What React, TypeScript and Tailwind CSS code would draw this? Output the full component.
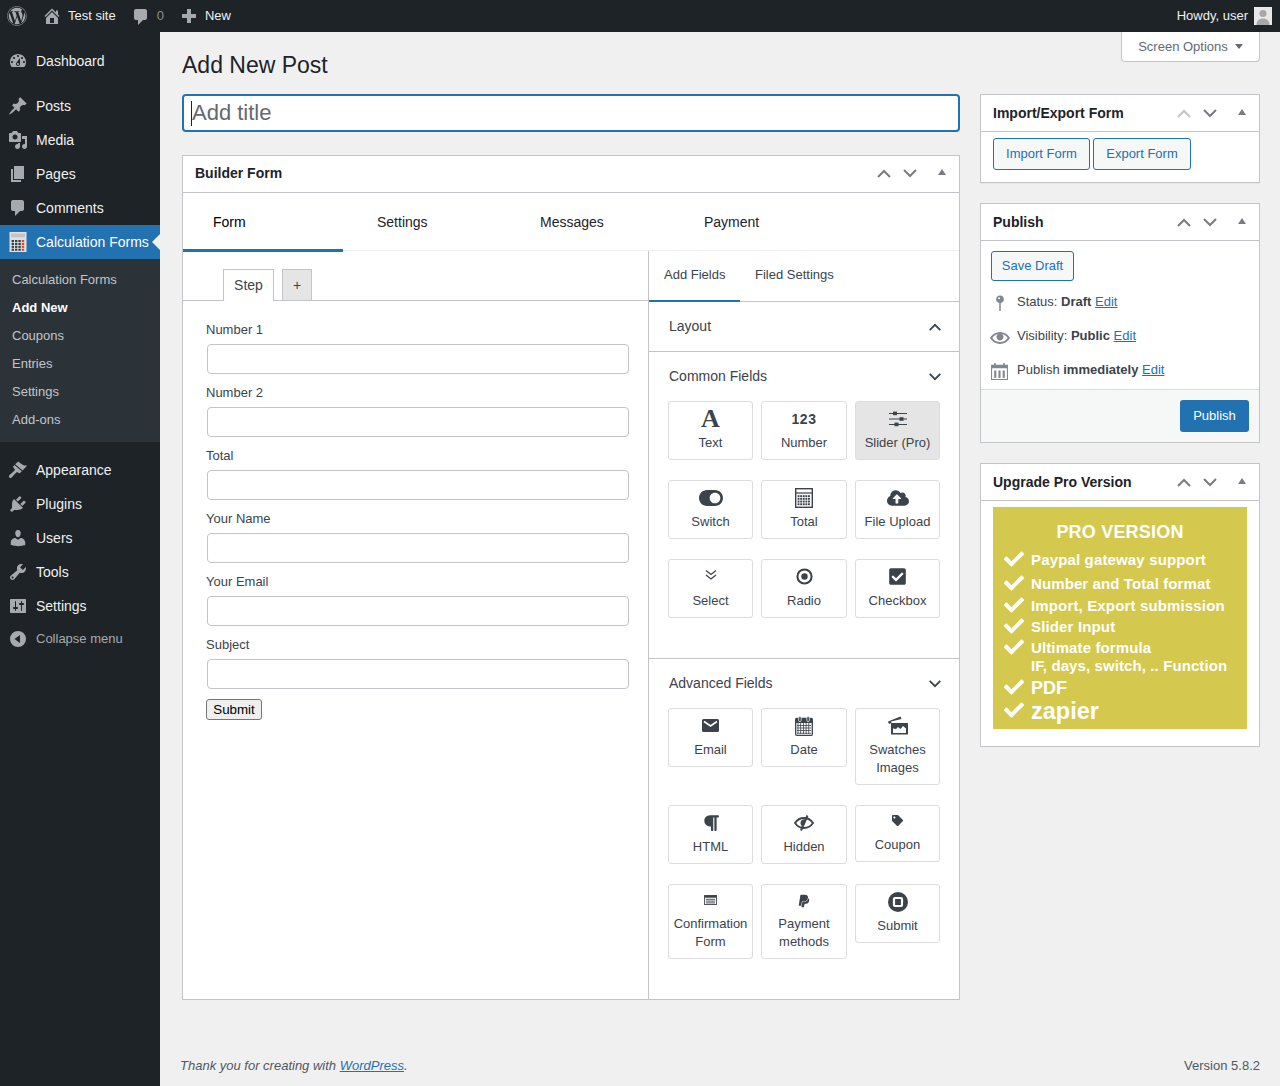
import React from "react";
import {
  FaWordpress, FaToggleOn, FaCloudUploadAlt, FaCheckSquare,
  FaParagraph, FaTag, FaPaypal, FaCheck,
} from "react-icons/fa";

const P: Record<string, string> = {
  dashboard: "M3.76 16h12.48c1.1-1.37 1.76-3.11 1.76-5 0-4.42-3.58-8-8-8s-8 3.58-8 8c0 1.89.66 3.63 1.76 5zM10 4c.55 0 1 .45 1 1s-.45 1-1 1-1-.45-1-1 .45-1 1-1zM6 6c.55 0 1 .45 1 1s-.45 1-1 1-1-.45-1-1 .45-1 1-1zm8 0c.55 0 1 .45 1 1s-.45 1-1 1-1-.45-1-1 .45-1 1-1zm-5.37 5.55L12 7v6c0 1.1-.9 2-2 2s-2-.9-2-2c0-.57.24-1.08.63-1.45zM4 10c.55 0 1 .45 1 1s-.45 1-1 1-1-.45-1-1 .45-1 1-1zm12 0c.55 0 1 .45 1 1s-.45 1-1 1-1-.45-1-1 .45-1 1-1zm-5 3c0-.55-.45-1-1-1s-1 .45-1 1 .45 1 1 1 1-.45 1-1z",
  pin: "M10.44 3.02l1.82-1.82 6.36 6.35-1.83 1.82c-1.05-.68-2.48-.57-3.41.36l-.75.75c-.92.93-1.04 2.35-.35 3.41l-1.83 1.82-2.41-2.41-2.8 2.79c-.42.42-3.38 2.71-3.8 2.29s1.86-3.39 2.28-3.81l2.79-2.79L4.1 9.36l1.83-1.82c1.05.69 2.48.57 3.4-.36l.75-.75c.93-.92 1.05-2.35.36-3.41z",
  media: "M13 11V4c0-.55-.45-1-1-1h-1.67L9 1H5L3.67 3H2c-.55 0-1 .45-1 1v7c0 .55.45 1 1 1h10c.55 0 1-.45 1-1zM7 4.5c1.38 0 2.5 1.12 2.5 2.5S8.38 9.5 7 9.5 4.5 8.38 4.5 7 5.62 4.5 7 4.5zM14 6h5v10.5c0 1.38-1.12 2.5-2.5 2.5S14 17.88 14 16.5s1.12-2.5 2.5-2.5c.17 0 .34.02.5.05V9h-3V6zm-4 8.05V13h2v3.5c0 1.38-1.12 2.5-2.5 2.5S7 17.88 7 16.5 8.12 14 9.5 14c.17 0 .34.02.5.05z",
  page: "M6 15V2h10v13H6zm-1 1h8v2H3V5h2v11z",
  comment: "M5 2h9c1.1 0 2 .9 2 2v7c0 1.1-.9 2-2 2h-2l-5 5v-5H5c-1.1 0-2-.9-2-2V4c0-1.1.9-2 2-2z",
  appearance: "M7.2 4.2 L10.2 1.6 C11.5 2.2 13 4.2 15 5 C16.5 5.6 18 5.6 19.2 5.4 L14.6 10.4 Z M6.4 5 L13.8 11.2 L12 13 C11.3 13.5 10.6 13.1 10 12.6 L9.2 12 C8.5 12.3 7.8 13 6.8 14 L3.6 17.6 C3 18.2 2 18 1.4 17.4 C0.8 16.8 0.8 15.9 1.4 15.2 L5 12 C6 11 6.6 10.4 7 9.6 L6.2 8.6 C5.6 8 5 7.2 5.2 6.4 Z",
  plugin: "M13.11 4.36L9.87 7.6 8 5.73l3.24-3.24c.35-.34 1.05-.2 1.56.32.52.51.66 1.21.31 1.55zm-8 1.77l.91-1.12 9.01 9.01-1.19.84c-.71.71-2.63 1.16-3.82 1.16H6.14L4.9 17.26c-.59.59-1.54.59-2.12 0-.59-.58-.59-1.53 0-2.12l1.24-1.24v-3.88c0-1.13.4-3.19 1.09-3.89zm7.26 3.97l3.24-3.24c.34-.35 1.04-.21 1.55.31.52.51.66 1.21.31 1.55l-3.24 3.25z",
  users: "M10 9.25c-2.27 0-2.73-3.44-2.73-3.44C7 4.02 7.82 2 9.97 2c2.16 0 2.98 2.02 2.71 3.81 0 0-.41 3.44-2.68 3.44zm0 2.57L12.72 10c2.39 0 4.52 2.33 4.52 4.53v2.49s-3.65 1.13-7.24 1.13c-3.65 0-7.24-1.13-7.24-1.13v-2.49c0-2.25 1.94-4.48 4.47-4.48z",
  tools: "M16.68 9.77c-1.34 1.34-3.3 1.67-4.95.99l-5.41 6.52c-.99.99-2.59.99-3.58 0s-.99-2.59 0-3.57l6.52-5.42c-.68-1.65-.35-3.61.99-4.95 1.28-1.28 3.12-1.62 4.72-1.06l-2.89 2.89 2.82 2.82 2.86-2.87c.53 1.58.18 3.39-1.08 4.65zM3.81 16.21c.4.39 1.04.39 1.43 0 .4-.4.4-1.04 0-1.43-.39-.4-1.03-.4-1.43 0-.39.39-.39 1.03 0 1.43z",
  settings: "M18 16V4c0-.55-.45-1-1-1H3c-.55 0-1 .45-1 1v12c0 .55.45 1 1 1h14c.55 0 1-.45 1-1zM8 11h1c.55 0 1 .45 1 1s-.45 1-1 1H8v1.5c0 .28-.22.5-.5.5s-.5-.22-.5-.5V13H6c-.55 0-1-.45-1-1s.45-1 1-1h1V5.5c0-.28.22-.5.5-.5s.5.22.5.5V11zm5-2h-1c-.55 0-1-.45-1-1s.45-1 1-1h1V5.5c0-.28.22-.5.5-.5s.5.22.5.5V7h1c.55 0 1 .45 1 1s-.45 1-1 1h-1v5.5c0 .28-.22.5-.5.5s-.5-.22-.5-.5V9z",
  collapse: "M10 2a8 8 0 1 0 0 16 8 8 0 0 0 0-16zm2 12L6.5 10 12 6v8z",
  home: "M16 8.5l1.53 1.53-1.06 1.06L10 4.62l-6.47 6.47-1.06-1.06L10 2.5l4 4v-2h2v4zm-6-2.46l6 5.99V18H4v-5.97zM12 17v-5H8v5h4z",
  plus: "M17 8v4h-5v5H8v-5H3V8h5V3h4v5h5z",
  eye: "M19.7 9.4C17.7 6 14 3.9 10 3.9S2.3 6 .3 9.4L0 10l.3.6c2 3.4 5.7 5.5 9.7 5.5s7.7-2.1 9.7-5.5l.3-.6-.3-.6zM10 14.1c-3.1 0-6-1.6-7.7-4.1C3.6 8 5.7 6.6 8 6.1c-.9.6-1.5 1.7-1.5 2.9 0 1.9 1.6 3.5 3.5 3.5s3.5-1.6 3.5-3.5c0-1.2-.6-2.3-1.5-2.9 2.3.5 4.4 1.9 5.7 3.9-1.7 2.5-4.6 4.1-7.7 4.1z",
};

function D({ n, className }: { n: string; className?: string }) {
  return (
    <svg viewBox="0 0 20 20" fill="currentColor" className={className}>
      <path d={P[n]} />
    </svg>
  );
}

function CalcMenuIcon() {
  const keys: React.ReactElement[] = [];
  for (let r = 0; r < 4; r++) {
    for (let c = 0; c < 4; c++) {
      keys.push(<rect key={`${r}-${c}`} x={2.6 + c * 3.4} y={8 + r * 2.9} width="2.4" height="2.1" fill={c === 3 ? "#e2492f" : "#3b4045"} />);
    }
  }
  return (
    <svg viewBox="0 0 18 20" className="w-[18px] h-[20px]">
      <rect x="0.5" y="0" width="17" height="20" fill="#dfe1e2" />
      <rect x="2" y="1.5" width="14" height="3.8" fill="#c2c5c7" />
      {keys}
    </svg>
  );
}

const navTop = [
  { n: "pin", t: "Posts" },
  { n: "media", t: "Media" },
  { n: "page", t: "Pages" },
  { n: "comment", t: "Comments" },
];
const navBottom = [
  { n: "appearance", t: "Appearance" },
  { n: "plugin", t: "Plugins" },
  { n: "users", t: "Users" },
  { n: "tools", t: "Tools" },
  { n: "settings", t: "Settings" },
];
const subs = ["Calculation Forms", "Add New", "Coupons", "Entries", "Settings", "Add-ons"];

function NavItem({ n, t }: { n: string; t: string }) {
  return (
    <div className="h-[34px] flex items-center text-[14px] text-[#f0f0f1]">
      <D n={n} className="w-5 h-5 ml-[8px] mr-[8px] text-[#a7aaad]" />
      {t}
    </div>
  );
}

function Chevron({ up, className }: { up?: boolean; className?: string }) {
  return (
    <svg viewBox="0 0 14 9" fill="none" stroke="currentColor" strokeWidth="2" className={className}>
      <polyline points={up ? "1,8 7,2 13,8" : "1,1 7,7 13,1"} />
    </svg>
  );
}

function BoxHeader({ title, dimUp, raised }: { title: string; dimUp?: boolean; raised?: boolean }) {
  return (
    <div className={`h-[37px] border-b border-[#c3c4c7] flex items-center pl-[12px] text-[14px] font-bold text-[#1d2327] ${raised ? "pb-[1px]" : ""}`}>
      <span className="flex-1">{title}</span>
      <Chevron up className={`w-[14px] h-[9px] mr-[12px] ${dimUp ? "text-[#c3c4c7]" : "text-[#787c82]"}`} />
      <Chevron className="w-[14px] h-[9px] mr-[21px] text-[#787c82]" />
      <span className="w-0 h-0 border-x-[4.5px] border-x-transparent border-b-[6px] border-b-[#787c82] mb-[3px] mr-[13px]" />
    </div>
  );
}

function Card({ t, icon, small, active }: { t: React.ReactNode; icon: React.ReactNode; small?: boolean; active?: boolean }) {
  return (
    <div className={`border border-[#dcdcde] rounded-[3px] flex flex-col items-center text-[13px] leading-[18px] text-[#3c434a] pb-[7px] ${active ? "bg-[#e5e5e5]" : "bg-white"}`}>
      <div className={`flex items-center justify-center pt-[1px] ${small ? "h-[30px]" : "h-[32px]"}`}>{icon}</div>
      <div className="text-center">{t}</div>
    </div>
  );
}

function SliderIcon() {
  return (
    <svg viewBox="0 0 18 16" className="w-[18px] h-[16px]" fill="#3c434a">
      <rect x="0" y="2" width="18" height="1" />
      <rect x="0" y="7.5" width="18" height="1" />
      <rect x="0" y="13" width="18" height="1" />
      <rect x="4" y="0.6" width="4" height="3.6" />
      <rect x="10.5" y="6.2" width="4" height="3.6" />
      <rect x="5.5" y="11.6" width="4" height="3.6" />
    </svg>
  );
}
function TotalIcon() {
  const k: React.ReactElement[] = [];
  for (let r = 0; r < 4; r++) for (let c = 0; c < 5; c++) k.push(<rect key={`${r}${c}`} x={2.6 + c * 2.6} y={7.2 + r * 2.7} width="1.9" height="1.9" fill="#3c434a" />);
  return (
    <svg viewBox="0 0 18 20" className="w-[18px] h-[20px]">
      <rect x="0.7" y="0.7" width="16.6" height="18.6" fill="none" stroke="#3c434a" strokeWidth="1.4" />
      <rect x="1" y="4.4" width="16" height="1.2" fill="#3c434a" />
      {k}
    </svg>
  );
}
function DateIcon() {
  const l: React.ReactElement[] = [];
  for (let i = 0; i < 4; i++) l.push(<rect key={`h${i}`} x="2" y={9 + i * 2.6} width="14" height="0.8" fill="#3c434a" />);
  for (let i = 0; i < 5; i++) l.push(<rect key={`v${i}`} x={2.6 + i * 2.7} y="7" width="0.8" height="11" fill="#3c434a" />);
  return (
    <svg viewBox="0 0 18 20" className="w-[18px] h-[20px]">
      <rect x="0.7" y="2.5" width="16.6" height="16.8" fill="none" stroke="#3c434a" strokeWidth="1.3" rx="1" />
      <rect x="0.7" y="2.5" width="16.6" height="4.5" fill="#3c434a" />
      <rect x="3.6" y="0.6" width="2.6" height="5" rx="1.3" fill="#3c434a" stroke="#fff" strokeWidth="0.7" />
      <rect x="11.8" y="0.6" width="2.6" height="5" rx="1.3" fill="#3c434a" stroke="#fff" strokeWidth="0.7" />
      {l}
    </svg>
  );
}
function SwatchIcon() {
  return (
    <svg viewBox="0 0 20 20" className="w-[20px] h-[20px]" fill="#3c434a">
      <path d="M0 5.5 L12.5 0.5 L13.5 3 L3 5.5 L3.5 7 L1 8z" />
      <path d="M3 7h17v11.5H3zM5 12.5v4.5h13v-4.5l-3-2.5-2.5 3-2.5-2-2 2z" fillRule="evenodd" />
    </svg>
  );
}
function RadioIcon() {
  return (
    <svg viewBox="0 0 18 18" className="w-[17px] h-[17px]">
      <circle cx="9" cy="9" r="7.5" fill="none" stroke="#3c434a" strokeWidth="2.2" />
      <circle cx="9" cy="9" r="3.4" fill="#3c434a" />
    </svg>
  );
}
function SubmitIcon() {
  return (
    <svg viewBox="0 0 20 20" className="w-[20px] h-[20px]">
      <circle cx="10" cy="10" r="10" fill="#3c434a" />
      <rect x="6" y="6" width="8" height="8" rx="1" fill="none" stroke="#fff" strokeWidth="2.2" />
    </svg>
  );
}
function FormIcon() {
  return (
    <svg viewBox="0 0 14 11" className="w-[13px] h-[10px] mb-[2px]">
      <rect x="0.5" y="0.5" width="13" height="10" fill="none" stroke="#3c434a" />
      <rect x="0.5" y="0.5" width="13" height="2.5" fill="#3c434a" />
      <rect x="2" y="4.2" width="10" height="1" fill="#3c434a" />
      <rect x="2" y="6.2" width="10" height="1" fill="#3c434a" />
      <rect x="2" y="8.2" width="10" height="1" fill="#3c434a" />
    </svg>
  );
}
function SelectIcon() {
  return (
    <svg viewBox="0 0 12 12" fill="none" stroke="#3c434a" strokeWidth="1.3" className="w-[12px] h-[12px] mb-[3px]">
      <polyline points="1,1.5 6,5.5 11,1.5" />
      <polyline points="1,6 6,10 11,6" />
    </svg>
  );
}
function EmailIcon() {
  return (
    <svg viewBox="0 0 17 13" className="w-[17px] h-[13px]">
      <rect x="0" y="0" width="17" height="13" rx="1.5" fill="#3c434a" />
      <polyline points="2,2.5 8.5,7 15,2.5" fill="none" stroke="#fff" strokeWidth="1.6" />
    </svg>
  );
}
function HiddenIcon() {
  return (
    <svg viewBox="0 0 20 16" className="w-[20px] h-[16px]" fill="none" stroke="#3c434a" strokeWidth="1.8">
      <path d="M1 8c2.2-3.2 5.4-5 9-5s6.8 1.8 9 5c-2.2 3.2-5.4 5-9 5S3.2 11.200 1 8z" />
      <path d="M6.500 8a3.500 3.500 0 0 1 5.500-3L8 11a3.500 3.500 0 0 1-1.500-3z" fill="#3c434a" stroke="none" />
      <line x1="13.500" y1="0.500" x2="7" y2="15.500" strokeWidth="2" />
    </svg>
  );
}

const ic = "text-[#3c434a]";
const commonRows: React.ReactNode[][] = [
  [
    <Card key="a" t="Text" icon={<span className={`${ic} [font-family:Liberation_Serif,serif] font-bold text-[26px] leading-none`}>A</span>} />,
    <Card key="b" t="Number" icon={<span className={`${ic} font-bold text-[14px] tracking-[0.5px]`}>123</span>} />,
    <Card key="c" t="Slider (Pro)" active icon={<SliderIcon />} />,
  ],
  [
    <Card key="a" t="Switch" icon={<FaToggleOn className={`${ic} w-[24px] h-[24px]`} />} />,
    <Card key="b" t="Total" icon={<TotalIcon />} />,
    <Card key="c" t="File Upload" icon={<FaCloudUploadAlt className={`${ic} w-[22px] h-[22px]`} />} />,
  ],
  [
    <Card key="a" t="Select" icon={<SelectIcon />} />,
    <Card key="b" t="Radio" icon={<RadioIcon />} />,
    <Card key="c" t="Checkbox" icon={<FaCheckSquare className={`${ic} w-[19px] h-[19px]`} />} />,
  ],
];
const advRows: React.ReactNode[][] = [
  [
    <Card key="a" t="Email" icon={<EmailIcon />} />,
    <Card key="b" t="Date" icon={<DateIcon />} />,
    <Card key="c" t={<>Swatches<br />Images</>} icon={<SwatchIcon />} />,
  ],
  [
    <Card key="a" t="HTML" icon={<FaParagraph className={`${ic} w-[16px] h-[18px]`} />} />,
    <Card key="b" t="Hidden" icon={<HiddenIcon />} />,
    <Card key="c" t="Coupon" small icon={<FaTag className={`${ic} w-[11px] h-[11px] mb-[3px]`} />} />,
  ],
  [
    <Card key="a" t={<>Confirmation<br />Form</>} small icon={<FormIcon />} />,
    <Card key="b" t={<>Payment<br />methods</>} small icon={<FaPaypal className={`${ic} w-[12px] h-[14px]`} />} />,
    <Card key="c" t="Submit" icon={<SubmitIcon />} />,
  ],
];

function CardGrid({ rows, gaps }: { rows: React.ReactNode[][]; gaps: string[] }) {
  return (
    <div className="pl-[19px]">
      {rows.map((r, i) => (
        <div key={i} className={`grid grid-cols-[85px_86px_85px] gap-x-[8px] items-start ${gaps[i]}`}>
          {r}
        </div>
      ))}
    </div>
  );
}

const fields = ["Number 1", "Number 2", "Total", "Your Name", "Your Email", "Subject"];

const bannerLines = [
  { t: "Paypal gateway support", y: "top-[44px]", s: "text-[15px] tracking-[0.15px]", cy: "top-[42px]" },
  { t: "Number and Total format", y: "top-[68px]", s: "text-[15px] tracking-[0.1px]", cy: "top-[66px]" },
  { t: "Import, Export submission", y: "top-[90px]", s: "text-[15px] tracking-[0.15px]", cy: "top-[88px]" },
  { t: "Slider Input", y: "top-[111px]", s: "text-[15px] tracking-[0.15px]", cy: "top-[109px]" },
  { t: "Ultimate formula", y: "top-[132px]", s: "text-[15px] tracking-[0.12px]", cy: "top-[130px]" },
  { t: "IF, days, switch, .. Function", y: "top-[150px]", s: "text-[15px] tracking-[0.1px]", cy: "" },
  { t: "PDF", y: "top-[172px]", s: "text-[18px]", cy: "top-[170px]" },
  { t: "zapier", y: "top-[195px]", s: "text-[23.5px]", cy: "top-[193px]" },
];

export default function App() {
  return (
    <div className="relative w-[1280px] h-[1086px] bg-[#f0f0f1] overflow-hidden [font-family:Liberation_Sans,Arial,sans-serif] text-[13px] text-[#3c434a]">
      {/* Admin bar */}
      <div className="h-[32px] bg-[#1d2327] flex items-center text-[13px] text-[#f0f0f1]">
        <FaWordpress className="w-[20px] h-[20px] ml-[7px] text-[#a7aaad]" />
        <D n="home" className="w-[20px] h-[20px] ml-[15px] text-[#a7aaad]" />
        <span className="ml-[6px]">Test site</span>
        <D n="comment" className="w-[20px] h-[20px] ml-[15px] text-[#a7aaad] mt-[2px]" />
        <span className="ml-[6px] text-[#8c8f94]">0</span>
        <D n="plus" className="w-[20px] h-[20px] ml-[15px] text-[#a7aaad]" />
        <span className="ml-[6px]">New</span>
        <span className="ml-auto">Howdy, user</span>
        <div className="w-[18px] h-[18px] ml-[6px] mr-[8px] bg-[#e8e8e8] flex items-end justify-center overflow-hidden">
          <svg viewBox="0 0 18 18" className="w-[18px] h-[18px]" fill="#a8a8a8">
            <circle cx="9" cy="6.5" r="3.6" />
            <path d="M2.5 18c0-4.5 3-6.5 6.5-6.5s6.5 2 6.5 6.5z" />
          </svg>
        </div>
      </div>

      <div className="flex h-[1054px]">
        {/* Sidebar */}
        <div className="w-[160px] h-full bg-[#1d2327] shrink-0">
          <div className="pt-[12px]">
            <NavItem n="dashboard" t="Dashboard" />
          </div>
          <div className="mt-[11px]">
            {navTop.map((x) => (
              <NavItem key={x.t} n={x.n} t={x.t} />
            ))}
          </div>
          <div className="relative h-[34px] bg-[#2271b1] flex items-center text-[14px] text-white">
            <div className="ml-[9px] mr-[9px] flex"><CalcMenuIcon /></div>
            <span className="whitespace-nowrap">Calculation Forms</span>
            <span className="absolute right-0 top-[9px] w-0 h-0 border-y-[8px] border-y-transparent border-r-[8px] border-r-[#f0f0f1]" />
          </div>
          <div className="bg-[#2c3338] pt-[7px] pb-[8px]">
            {subs.map((s) => (
              <div key={s} className={`h-[28px] pl-[12px] flex items-center text-[13px] ${s === "Add New" ? "font-bold text-white" : "text-[#c3c4c7]"}`}>
                {s}
              </div>
            ))}
          </div>
          <div className="mt-[11px]">
            {navBottom.map((x) => (
              <NavItem key={x.t} n={x.n} t={x.t} />
            ))}
          </div>
          <div className="h-[32px] flex items-center text-[13px] text-[#a7aaad]">
            <D n="collapse" className="w-5 h-5 ml-[8px] mr-[8px]" />
            Collapse menu
          </div>
        </div>

        {/* Main */}
        <div className="relative flex-1 pl-[22px] pr-[20px]">
          <div className="absolute right-[20px] top-0 w-[139px] h-[30px] bg-white border border-t-0 border-[#c3c4c7] rounded-b-[4px] flex items-center justify-center text-[13px] text-[#646970]">
            Screen Options
            <span className="ml-[7px] w-0 h-0 border-x-[4px] border-x-transparent border-t-[5px] border-t-[#646970]" />
          </div>

          <h1 className="h-[62px] pt-[19px] text-[23px] leading-[29px] font-normal text-[#1d2327]">Add New Post</h1>

          <div className="flex gap-[20px] items-start">
            {/* Left column */}
            <div className="w-[778px]">
              <div className="relative h-[38px] bg-white border-2 border-[#2271b1] rounded-[4px] flex items-center pl-[8px] pb-[1px] text-[22px] text-[#646970]">
                <span className="absolute left-[7px] top-[5px] w-[1px] h-[25px] bg-[#1d2327]" />
                Add title
              </div>

              <div className="mt-[23px] h-[845px] bg-white border border-[#c3c4c7] flex flex-col">
                <BoxHeader title="Builder Form" raised />
                {/* main tabs */}
                <div className="h-[58px] shrink-0 flex text-[14px] text-[#1d2327] border-b-[1px] border-[#f0f0f1] relative">
                  <div className="relative z-10 w-[160px] h-[59px] pl-[30px] pt-[19px] text-black border-b-[3px] border-[#2271b1]">Form</div>
                  <div className="absolute left-[194px] top-[19px]">Settings</div>
                  <div className="absolute left-[357px] top-[19px]">Messages</div>
                  <div className="absolute left-[521px] top-[19px]">Payment</div>
                </div>

                <div className="flex flex-1">
                  {/* form area */}
                  <div className="w-[466px] border-r border-[#c3c4c7]">
                    <div className="h-[50px] border-b border-[#c3c4c7] flex items-end pl-[40px] text-[14px]">
                      <div className="w-[51px] h-[32px] -mb-[1px] bg-white border border-b-0 border-[#c3c4c7] flex items-center justify-center">Step</div>
                      <div className="w-[30px] h-[31px] ml-[8px] bg-[#e5e5e5] border border-b-0 border-[#c3c4c7] flex items-center justify-center">+</div>
                    </div>
                    <div className="pl-[23px] pt-[21px]">
                      {fields.map((f) => (
                        <div key={f} className="h-[63px]">
                          <div className="h-[16px] leading-[16px] text-[13px]">{f}</div>
                          <div className="mt-[6px] ml-[1px] w-[422px] h-[30px] bg-white border border-[#c3c4c7] rounded-[4px]" />
                        </div>
                      ))}
                      <button className="block -mt-[1px] w-[56px] h-[21px] bg-[#efefef] border border-[#767676] rounded-[3px] text-[13.33px] leading-none text-black">Submit</button>
                    </div>
                  </div>

                  {/* field palette */}
                  <div className="flex-1">
                    <div className="h-[51px] border-b border-[#c3c4c7] flex text-[13px] relative">
                      <div className="w-[91px] h-[51px] pl-[15px] pt-[14px] border-b-[2px] border-[#2271b1]">Add Fields</div>
                      <div className="pl-[15px] pt-[14px]">Filed Settings</div>
                    </div>
                    <div className="h-[50px] border-b border-[#c3c4c7] flex items-center justify-between pl-[20px] pr-[17px] text-[14px]">
                      Layout
                      <Chevron up className="w-[14px] h-[8px] text-[#3c434a]" />
                    </div>
                    <div className="h-[307px] border-b border-[#c3c4c7]">
                      <div className="h-[49px] flex items-center justify-between pl-[20px] pr-[17px] text-[14px]">
                        Common Fields
                        <Chevron className="w-[14px] h-[8px] text-[#3c434a]" />
                      </div>
                      <CardGrid rows={commonRows} gaps={["mb-[20px]", "mb-[20px]", ""]} />
                    </div>
                    <div className="h-[49px] flex items-center justify-between pl-[20px] pr-[17px] text-[14px]">
                      Advanced Fields
                      <Chevron className="w-[14px] h-[8px] text-[#3c434a]" />
                    </div>
                    <CardGrid rows={advRows} gaps={["mb-[20px]", "mb-[20px]", ""]} />
                  </div>
                </div>
              </div>
            </div>

            {/* Right column */}
            <div className="w-[280px]">
              <div className="h-[89px] bg-white border border-[#c3c4c7] shadow-[0_1px_1px_rgba(0,0,0,0.04)]">
                <BoxHeader title="Import/Export Form" dimUp />
                <div className="flex gap-[3px] pl-[12px] pt-[6px] text-[13px]">
                  <div className="w-[97px] h-[32px] border border-[#2271b1] rounded-[3px] bg-[#f6f7f7] text-[#2271b1] flex items-center justify-center">Import Form</div>
                  <div className="w-[98px] h-[32px] border border-[#2271b1] rounded-[3px] bg-[#f6f7f7] text-[#2271b1] flex items-center justify-center">Export Form</div>
                </div>
              </div>

              <div className="mt-[20px] h-[240px] bg-white border border-[#c3c4c7] flex flex-col">
                <BoxHeader title="Publish" />
                <div className="flex-1 pl-[10px] pt-[10px]">
                  <div className="w-[83px] h-[30px] border border-[#2271b1] rounded-[3px] bg-[#f6f7f7] text-[#2271b1] flex items-center justify-center">Save Draft</div>
                  <div className="relative h-[34px] mt-[4px] flex items-center pl-[26px]">
                    <svg viewBox="0 0 10 18" className="absolute left-[4px] top-[10px] w-[10px] h-[17px]" fill="#82878c">
                      <circle cx="5" cy="4.5" r="4" />
                      <rect x="4.2" y="7" width="1.6" height="10" />
                      <circle cx="4" cy="3.5" r="1" fill="#fff" />
                    </svg>
                    <span>Status: <b>Draft</b> <a className="text-[#2271b1] underline">Edit</a></span>
                  </div>
                  <div className="relative h-[34px] flex items-center pl-[26px]">
                    <D n="eye" className="absolute left-[-1px] top-[9px] w-[20px] h-[20px] text-[#82878c]" />
                    <span>Visibility: <b>Public</b> <a className="text-[#2271b1] underline">Edit</a></span>
                  </div>
                  <div className="relative h-[34px] flex items-center pl-[26px]">
                    <svg viewBox="0 0 16 17" className="absolute left-[0px] top-[9px] w-[17px] h-[18px]" fill="#82878c">
                      <path d="M0 2.5h3V1h1.5v1.5h7V1H13v1.5h3V17H0zM1 6v10h14V6z" fillRule="evenodd" />
                      <rect x="3" y="8" width="2" height="7" />
                      <rect x="7" y="8" width="2" height="7" />
                      <rect x="11" y="8" width="2" height="7" />
                    </svg>
                    <span>Publish <b>immediately</b> <a className="text-[#2271b1] underline">Edit</a></span>
                  </div>
                </div>
                <div className="h-[53px] bg-[#f6f7f7] border-t border-[#dcdcde] flex items-center justify-end pr-[10px]">
                  <div className="w-[69px] h-[32px] bg-[#2271b1] rounded-[3px] text-white flex items-center justify-center">Publish</div>
                </div>
              </div>

              <div className="mt-[20px] h-[284px] bg-white border border-[#c3c4c7]">
                <BoxHeader title="Upgrade Pro Version" />
                <div className="relative ml-[12px] mt-[6px] w-[254px] h-[222px] bg-[#d4c94e] text-white font-bold overflow-hidden whitespace-nowrap">
                  <div className="absolute inset-x-0 top-[14px] text-center text-[18px] leading-[22px] tracking-[0.2px]">PRO VERSION</div>
                  {bannerLines.map((l) => (
                    <React.Fragment key={l.t}>
                      {l.cy && <FaCheck className={`absolute left-[10px] w-[22px] h-[20px] ${l.cy}`} />}
                      <div className={`absolute left-[38px] leading-[18px] ${l.y} ${l.s}`}>{l.t}</div>
                    </React.Fragment>
                  ))}
                </div>
              </div>
            </div>
          </div>

          <div className="absolute left-[20px] right-[20px] top-[1025px] flex justify-between text-[13px] text-[#50575e] leading-[18px]">
            <i>Thank you for creating with <a className="text-[#2271b1] underline">WordPress</a>.</i>
            <span>Version 5.8.2</span>
          </div>
        </div>
      </div>
    </div>
  );
}
